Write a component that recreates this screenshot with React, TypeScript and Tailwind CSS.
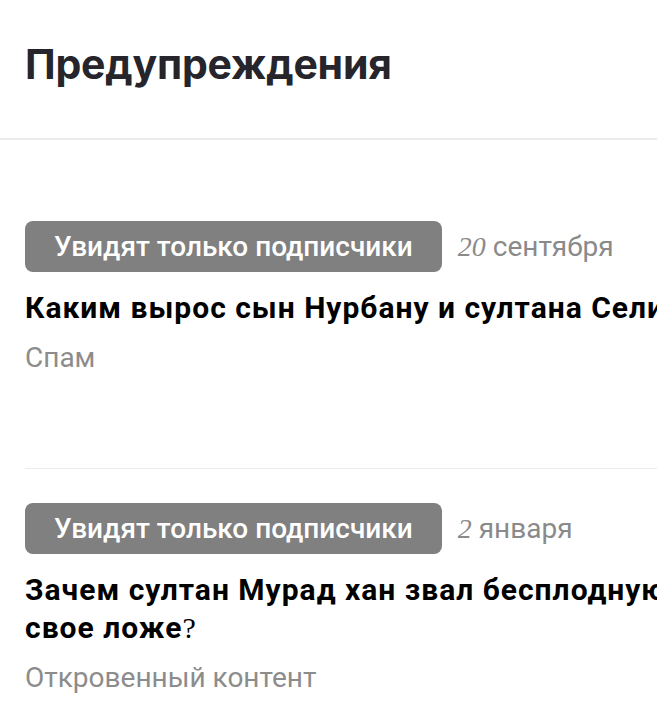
import React from "react";

interface Warning {
  day: string;
  month: string;
  title: string;
  reason: string;
}

const warnings: Warning[] = [
  {
    day: "20",
    month: "сентября",
    title: "Каким вырос сын Нурбану и султана Селима",
    reason: "Спам",
  },
  {
    day: "2",
    month: "января",
    title: "Зачем султан Мурад хан звал бесплодную Сафие в",
    reason: "Откровенный контент",
  },
];

const roboto = "font-['Roboto','Liberation_Sans',sans-serif]";
const odd = "font-['Liberation_Serif',serif] font-normal";

function WarningItem({ item, last }: { item: Warning; last: boolean }) {
  return (
    <div className={`pt-[34px] ${last ? "pb-[20px]" : "pb-[91px] border-b border-[#ebebeb]"}`}>
      <div className="flex items-center gap-4">
        <span className="h-[51px] px-[29px] rounded-lg bg-[#808080] text-white text-[28px] font-medium flex items-center whitespace-nowrap">
          Увидят только подписчики
        </span>
        <span className="text-[28px] text-[#8a8a8a] whitespace-nowrap">
          <span className={`${odd} italic`}>{item.day}</span> {item.month}
        </span>
      </div>
      <div className="mt-[17px] text-[30px] leading-[38px] font-bold tracking-[1px] text-black">
        {item.title}
        {last ? (
          <>
            {" "}свое ложе<span className={odd}>?</span>
          </>
        ) : null}
      </div>
      <div className="mt-[12px] text-[28px] leading-[38px] text-[#8c8c8c]">{item.reason}</div>
    </div>
  );
}

export default function App() {
  return (
    <div className="w-[657px] h-[713px] overflow-hidden bg-white">
      <div className="h-[140px] flex items-center px-[25px] border-b-2 border-[#ececec]">
        <h1 className="text-[41px] font-bold text-[#25252b] font-['Inter','Noto_Sans',sans-serif] tracking-[-0.2px] mt-[-8px]">
          Предупреждения
        </h1>
      </div>
      <div className={`w-[870px] pl-[25px] pt-[47px] ${roboto}`}>
        {warnings.map((w, i) => (
          <WarningItem key={w.month} item={w} last={i === warnings.length - 1} />
        ))}
      </div>
    </div>
  );
}
